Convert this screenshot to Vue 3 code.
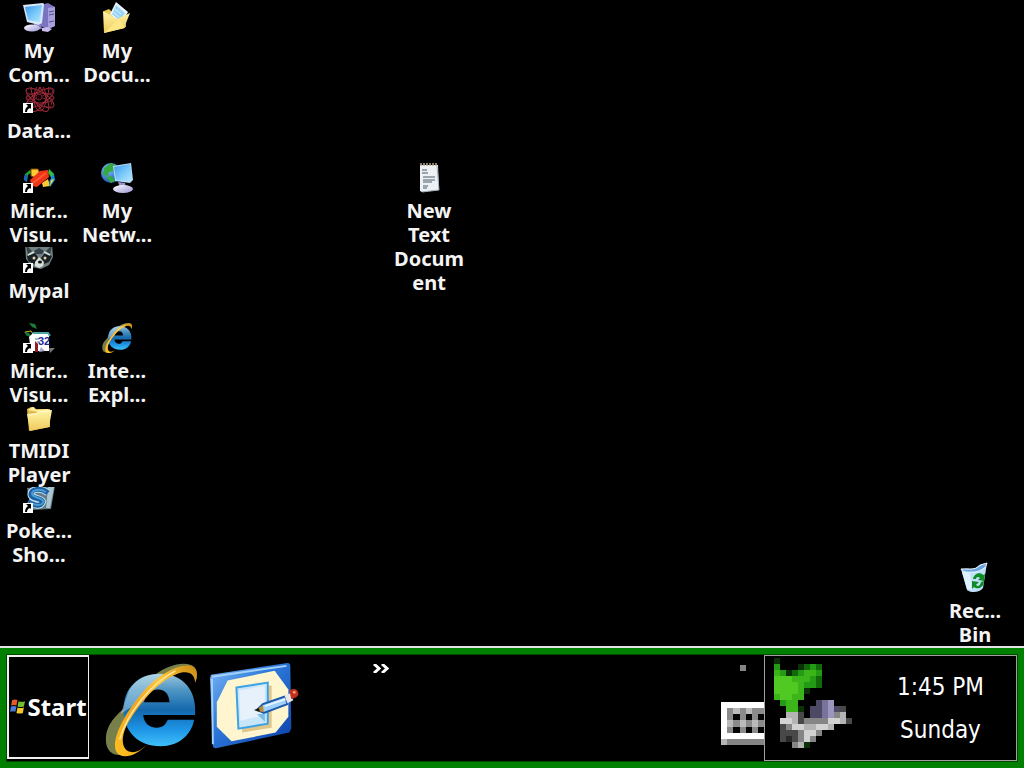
<script setup>
const shortcuts = [
  { icon: 'computer', lines: ['My', 'Com...'], col: 1, row: 1 },
  { icon: 'documents', lines: ['My', 'Docu...'], col: 2, row: 1 },
  { icon: 'atom', lines: ['Data...'], col: 1, row: 2, link: true },
  { icon: 'studio', lines: ['Micr...', 'Visu...'], col: 1, row: 3, link: true },
  { icon: 'network', lines: ['My', 'Netw...'], col: 2, row: 3 },
  { icon: 'notepad', lines: ['New', 'Text', 'Docum', 'ent'], col: 6, row: 3 },
  { icon: 'raccoon', lines: ['Mypal'], col: 1, row: 4, link: true },
  { icon: 'basic', lines: ['Micr...', 'Visu...'], col: 1, row: 5, link: true },
  { icon: 'explorer', lines: ['Inte...', 'Expl...'], col: 2, row: 5 },
  { icon: 'folder', lines: ['TMIDI', 'Player'], col: 1, row: 6 },
  { icon: 'showdown', lines: ['Poke...', 'Sho...'], col: 1, row: 7, link: true },
  { icon: 'recycle', lines: ['Rec...', 'Bin'], col: 13, row: 8 },
]

const palette = {
  a: '#50c923', b: '#3bb51a', g: '#249b14', d: '#12690a', k: '#0a3206',
  w: '#d2d2d2', l: '#b4b4b4', m: '#858585', n: '#484848', o: '#282828',
  p: '#77739a', q: '#4d4965', v: '#9b96bd',
}
const toPixels = (rows) =>
  rows.flatMap((row, y) =>
    [...row].map((c, x) => ({ x, y, fill: palette[c] })).filter((p) => p.fill))

const trayPixels = toPixels([
  '.k............',
  '.g...kdgd.....',
  '.bgkdgbbg.....',
  '.aaabbbgd.....',
  '.aaaabggd.....',
  '.aaaabk.......',
  '.baabb........',
  '..gbb...qpv...',
  '...bbk.qqpvqn.',
  '...lln.qqpvml.',
  '..wwlnmmmmwwln',
  '..nmwwllwwl...',
  '..nnnmwwm.....',
  '..nonmwm......',
  '....mlk.......',
])
</script>

<template>
  <div class="screen">
    <svg class="defs" aria-hidden="true">
      <defs>
        <linearGradient id="glass" x1="0" y1="0" x2="1" y2="1">
          <stop offset="0" stop-color="#3a96e8" /><stop offset="0.5" stop-color="#75c6fa" /><stop offset="1" stop-color="#b5e8ff" />
        </linearGradient>
        <linearGradient id="plastic" x1="0" y1="0" x2="1" y2="1">
          <stop offset="0" stop-color="#ffffff" /><stop offset="1" stop-color="#9a96d6" />
        </linearGradient>
        <linearGradient id="manila" x1="0" y1="0" x2="0" y2="1">
          <stop offset="0" stop-color="#fff5a8" /><stop offset="1" stop-color="#efc95a" />
        </linearGradient>
        <linearGradient id="ieblue" x1="0" y1="0" x2="0" y2="1">
          <stop offset="0" stop-color="#9cc5dc" /><stop offset="0.22" stop-color="#4f96c4" /><stop offset="0.5" stop-color="#1468ac" /><stop offset="0.75" stop-color="#1c91e3" /><stop offset="1" stop-color="#3fc0fa" />
        </linearGradient>
        <linearGradient id="iegold" x1="1" y1="0" x2="0" y2="1">
          <stop offset="0" stop-color="#c98a12" /><stop offset="0.3" stop-color="#ffc63a" /><stop offset="0.6" stop-color="#f2a51c" /><stop offset="1" stop-color="#ffc020" />
        </linearGradient>
        <linearGradient id="frame" x1="0" y1="0" x2="1" y2="1">
          <stop offset="0" stop-color="#7db8f5" /><stop offset="0.4" stop-color="#2f7bdc" /><stop offset="1" stop-color="#0b3da8" />
        </linearGradient>
        <radialGradient id="globe" cx="0.35" cy="0.3" r="0.8">
          <stop offset="0" stop-color="#7fc7ff" /><stop offset="1" stop-color="#1246a8" />
        </radialGradient>
      </defs>

      <symbol id="computer" viewBox="0 0 32 32">
        <path d="M18 3l7-2 7 4v19l-7 3-8-3z" fill="#7a74c0" />
        <path d="M25 6l7-1v19l-7 3z" fill="#a7a0dc" />
        <path d="M26 10l5-1M26 13l5-1M26 20l5-1" stroke="#514c94" />
        <path d="M11 21l7 2 1 4-8 1z" fill="#8580c7" />
        <ellipse cx="9" cy="26" rx="8" ry="3.5" fill="url(#plastic)" />
        <path d="M0 3l20-2 1 1-2 19-3 2-12-3z" fill="#d8e8fb" />
        <path d="M2 5l17-2-2 17-12-2z" fill="url(#glass)" />
        <path d="M19 26l5-1 5 2-4 3-6-1z" fill="#c7bceb" />
      </symbol>
      <symbol id="documents" viewBox="0 0 32 32">
        <path d="M3 9l5-2 3 3h13l1 15-21 5z" fill="#edc951" />
        <path d="M15 0l12 10-7 12L9 12z" fill="#e9f8ff" />
        <path d="M15 3l9 8-5 8-8-7z" fill="#9bd4f4" />
        <path d="M14 7l6 5M12 10l6 5" stroke="#d9f2ff" />
        <path d="M2 9l14 8 13-6-6 15L3 31z" fill="url(#manila)" />
        <path d="M3 31l15-14 6 9z" fill="#ffe783" />
      </symbol>
      <symbol id="atom" viewBox="0 0 32 32">
        <g fill="none" stroke="#a02b3a" stroke-width="1">
          <ellipse cx="17" cy="16" rx="14" ry="5" /><ellipse cx="17" cy="16" rx="16" ry="6" transform="rotate(32 17 16)" />
          <ellipse cx="17" cy="16" rx="15" ry="6" transform="rotate(62 17 16)" /><ellipse cx="17" cy="16" rx="13" ry="6" transform="rotate(90 17 16)" />
          <ellipse cx="17" cy="16" rx="15" ry="6" transform="rotate(118 17 16)" /><ellipse cx="17" cy="16" rx="16" ry="6" transform="rotate(148 17 16)" />
        </g>
        <path d="M3 7h27l-2 18-22-1zM4 11l25 8M29 11L4 19" fill="none" stroke="#7d2430" stroke-dasharray="3 1" />
        <circle cx="16" cy="15" r="3" fill="#100204" stroke="#7c1f2a" />
      </symbol>
      <symbol id="studio" viewBox="0 0 32 32">
        <path d="M7 8l-5 4-1 6 3 2 1-7 4-3z" fill="#18a62c" /><path d="M1 14l3-2v8l-2-1z" fill="#2358d8" />
        <path d="M8 7h7l2 5-4 4-5-2z" fill="#ffc933" stroke="#7c4b00" /><path d="M19 21l6-4 2 7-7 1z" fill="#ffc933" />
        <path d="M26 7l5 5 1 6-5 7-1-5 2-4z" fill="#148ce0" /><path d="M26 7l5 5-3 3-3-4z" fill="#31bd36" /><path d="M28 18l3-1-4 7z" fill="#ffdc27" />
        <path d="M7 18L17 9l8-1 1 7-12 10-5-1z" fill="#ef3518" /><path d="M10 21L23 11" stroke="#ff5a30" stroke-width="2" />
      </symbol>
      <symbol id="network" viewBox="0 0 32 32">
        <circle cx="10" cy="11" r="10" fill="url(#globe)" />
        <path d="M3 6l7-5 6 3-3 5-5 1-1 4-5-1zM5 15l6-1 3 5-4 2z" fill="#35a93e" />
        <path d="M17 20l7 1 1 5-6-1z" fill="#9c98cf" /><ellipse cx="22" cy="27" rx="10" ry="4" fill="url(#plastic)" />
        <path d="M12 4l18-3 2 17-3 3-15-2z" fill="#b5dcf8" /><path d="M13 5l16-3 2 15-2 2-14-1z" fill="url(#glass)" />
      </symbol>
      <symbol id="notepad" viewBox="0 0 32 32">
        <path d="M7 3h18l1 25-17 2-2-1z" fill="#edf1f4" /><path d="M24 4l2 24-17 2" fill="none" stroke="#9fb1bd" />
        <path d="M8 4V1m3 3V1m3 3V1m3 3V1m3 3V1m3 3V1" stroke="#b2a98d" stroke-width="1.5" />
        <path d="M9 8h5M9 11h6M10 15h12M10 18h12M10 20h9M10 24h5M10 26h4" stroke="#4b5b6b" />
      </symbol>
      <symbol id="raccoon" viewBox="0 0 32 32">
        <path d="M2 2l8 3h12l7-3 1 13-4 8-8 4-9-2-6-8z" fill="#718080" />
        <path d="M3 3l6 6-4 4zM29 3l-6 6 4 4z" fill="#344249" />
        <path d="M4 14l8-3 4 6-5 5-6-3zM18 16l4-5 7 3-3 6-5 2z" fill="#182023" />
        <path d="M11 9l5-3 5 3-2 3h-6z" fill="#344148" /><path d="M5 13l6-3M21 10l6 3" stroke="#dce4df" stroke-width="1.5" />
        <circle cx="11" cy="16" r="1.5" fill="#e3d2b1" /><circle cx="22" cy="16" r="1.5" fill="#e3d2b1" />
        <path d="M12 20l4-5 5 5-1 4-4 2-4-2z" fill="#d9dfda" /><ellipse cx="17" cy="20" rx="2" ry="1.5" fill="#111" />
      </symbol>
      <symbol id="basic" viewBox="0 0 32 32">
        <path d="M6 1l6 1 2 5-5-2zM1 10l5 1 3 4-5-1z" fill="#1b7b38" /><path d="M2 10l6-1 2 3" fill="none" stroke="#c6bd2d" />
        <path d="M6 15l4-4h16v18H8z" fill="#fff" /><path d="M10 11h15l2 3" fill="none" stroke="#49a7a6" stroke-width="2" />
        <path d="M12 17h4m-2 3h3" stroke="#a7bac2" stroke-width="2" />
        <text x="15" y="23" class="badge32">32</text><path d="M12 19l3 3v8h-3z" fill="#8f1d20" /><path d="M18 25l4 4-6 1z" fill="#a8a8ce" /><path d="M26 26h6l-5 5z" fill="#777" />
      </symbol>
      <symbol id="explorer" viewBox="0 0 100 100">
        <path d="M32 42C43 16 72-2 91 4c7 3 7 12 4 18 0-10-7-14-18-11C57 18 38 39 27 62c-8 15-11 26-5 33C14 98 3 93 4 79 4 64 17 51 32 42z" fill="#777f4a" />
        <path fill-rule="evenodd" d="M58 13C84 13 97 31 95 55H42c1 9 7 13 14 13 6 0 9-3 11-8h27c-3 16-16 27-34 27-24 0-38-16-38-37 0-23 16-37 36-37zM43 42h26c-1-9-5-13-12-13-8 0-13 5-14 13z" fill="url(#ieblue)" />
        <path d="M28 29c9-13 23-18 40-15L33 45l-14 9z" fill="#c6e4ef" opacity=".45" />
        <path d="M39 35C54 16 77 2 91 5c7 2 7 10 4 17 0-9-7-13-18-9C56 21 36 46 25 66c-7 15-4 27 6 27 6 0 11-4 15-8-10 12-26 16-31 8-7-11 8-39 24-58z" fill="url(#iegold)" />
        <path d="M75 10C49 23 25 55 18 80" fill="none" stroke="#ffe9a1" stroke-width="1.5" />
      </symbol>
      <symbol id="folder" viewBox="0 0 32 32">
        <path d="M4 7l6-3 3 3h14v18L6 29z" fill="#dfb84c" /><path d="M5 8l5-3 3 3 12-1 1 5z" fill="#fff0a0" />
        <path d="M4 12l9-1 3-2 13-1-3 17-19 4z" fill="url(#manila)" /><path d="M6 13l7-1 3-2 11-1" fill="none" stroke="#fffbd0" />
      </symbol>
      <symbol id="showdown" viewBox="0 0 32 32">
        <path d="M4 6L32 4l-4 23-20 1z" fill="#647985" /><path d="M25 5l6 0-4 21h-4zM12 7l12-1-1 3H8z" fill="#abc6d1" />
        <path d="M25 11c-7-6-17-4-17 1-1 5 14 4 11 9-2 4-9 2-14-1" fill="none" stroke="#b9e1ef" stroke-width="7" />
        <path d="M25 11c-7-6-17-4-17 1-1 5 14 4 11 9-2 4-9 2-14-1" fill="none" stroke="#205ea4" stroke-width="5" />
        <path d="M23 10c-7-4-14-2-14 2 0 4 14 4 11 9-2 3-8 2-13 0" fill="none" stroke="#479ed0" stroke-width="2" />
      </symbol>
      <symbol id="recycle" viewBox="0 0 32 32">
        <path d="M2 7c8-2 12 2 16-2 4-4 7-3 10-4l-4 25c-3 5-13 5-16 2z" fill="#bfe0fa" />
        <path d="M2 7c9 0 14 1 18-3 3-2 6-2 8-3-1 5-6 8-12 9-6 0-12 1-14-3z" fill="#6ba5dc" stroke="#edf9ff" />
        <path d="M3 10l8 1 2 17-5-1z" fill="#e9f6ff" opacity=".8" />
        <path d="M14 17c1-6 8-7 10-4l2-1-1 7-6-1 2-2c-2-2-4-1-4 1zM25 19c0 7-7 9-10 6l-2 2v-8l7 1-3 3c2 2 4 1 5-3z" fill="#0f8d22" />
      </symbol>
      <symbol id="shortcut" viewBox="0 0 10 10">
        <path d="M0 0h10v10H0z" fill="#fff" /><path d="M3 1h5v5L7 5Q4 6 4 9H2Q2 5 5 3z" fill="#000" />
      </symbol>
    </svg>

    <main class="desktop">
      <button
        v-for="item in shortcuts" :key="item.col + '-' + item.row" type="button" class="shortcut"
        :style="{ gridColumn: item.col, gridRow: item.row }"
      >
        <span class="picture">
          <svg class="icon" aria-hidden="true"><use :href="'#' + item.icon" /></svg>
          <svg v-if="item.link" class="arrow" aria-hidden="true"><use href="#shortcut" /></svg>
        </span>
        <span class="label"><span v-for="line in item.lines" :key="line">{{ line }}</span></span>
      </button>
    </main>

    <footer class="taskbar">
      <button type="button" class="start">
        <svg class="flag" viewBox="0 0 14 14" aria-hidden="true">
          <path d="M2 1q3-1 5 0L6 6Q4 5 1 6z" fill="#e35a2b" /><path d="M8 2q3 1 6 0l-1 5q-3 1-6 0z" fill="#6fbd31" />
          <path d="M1 7q3-1 5 0l-1 5q-2-1-5 0z" fill="#477be0" /><path d="M7 8q3 1 6 0l-1 5q-3 1-6 0z" fill="#f1c72d" />
        </svg>
        <span>Start</span>
      </button>
      <nav class="quick" aria-label="Quick Launch">
        <button type="button" class="launch" aria-label="Internet Explorer">
          <svg class="big" aria-hidden="true"><use href="#explorer" /></svg>
        </button>
        <button type="button" class="launch" aria-label="Show Desktop">
          <svg class="big" viewBox="0 0 100 100" aria-hidden="true">
            <path d="M3 14L81 2q3 0 3 3l1 64-2 4L8 89q-3 0-3-3L2 18z" fill="url(#frame)" />
            <path d="M4 16l76-11M5 85L4 18" stroke="#a4d1fa" stroke-width="2" fill="none" />
            <path d="M20 20l48-10 14 19v28L69 73 24 82 9 67V42z" fill="#fff6cf" />
            <path d="M31 30l34-5v43l-30 5z" fill="#cba65b" opacity=".6" />
            <path d="M29 27l32-5v42l-30 5z" fill="#c9e5fa" stroke="#3ca2e4" stroke-width="2" />
            <path d="M32 30l26-5v30l-25 6z" fill="#e6f1fc" />
            <path d="M50 50l6-6 23-8 2 8-24 9z" fill="#9fd0ff" stroke="#1e58aa" stroke-width="2" />
            <path d="M58 46l21-7" stroke="#e3f4ff" stroke-width="2" /><path d="M48 51l8-6 1 7z" fill="#b98a32" /><path d="M47 50l5-2 1 4z" fill="#161616" />
            <path d="M50 54l8 8v-8z" fill="#79bce8" />
            <path d="M78 35l6-2 3 7-6 3z" fill="#e8e8e8" /><path d="M83 30q5-3 8 0 3 4-1 7l-5 2z" fill="#c4301f" /><circle cx="88" cy="32" r="1.5" fill="#ff9b75" />
          </svg>
        </button>
      </nav>
      <button type="button" class="more" aria-label="More">
        <svg viewBox="0 0 16 9" aria-hidden="true"><path d="M1 0l5 4.5L1 9M9 0l5 4.5L9 9" fill="none" stroke="#fff" stroke-width="3" /></svg>
      </button>
      <div class="language">
        <span class="dot"></span>
        <svg class="keyboard" viewBox="0 0 43 43" shape-rendering="crispEdges" aria-hidden="true">
          <path d="M0 0h43v43H0z" fill="#fff" /><path d="M6 37h37v6H6z" fill="#858585" /><path d="M0 37h6v6H0z" fill="#b5b5b5" />
          <path d="M6 6h37v25H6z" fill="#8b8b8b" />
          <path d="M12 12h7v6h-7zM25 12h6v6h-6zM37 12h6v6h-6zM12 25h7v6h-7zM25 25h6v6h-6zM37 25h6v6h-6z" fill="#050505" />
          <path d="M12 6h7v6h-7zM25 6h6v6h-6zM6 18h6v7H6zM19 18h6v7h-6zM31 18h6v7h-6z" fill="#bbb" />
        </svg>
      </div>
      <section class="tray" aria-label="Notification area">
        <svg class="device" viewBox="0 0 16 16" shape-rendering="crispEdges" aria-hidden="true">
          <rect v-for="p in trayPixels" :key="p.x + '-' + p.y" :x="p.x" :y="p.y" width="1" height="1" :fill="p.fill" />
        </svg>
        <div class="clock"><time>1:45 PM</time><span>Sunday</span></div>
      </section>
    </footer>
  </div>
</template>

<style>
body { background: #000; }
</style>

<style scoped>
.screen {
  display: flex; flex-direction: column; height: 100vh; overflow: hidden;
  background: #000; color: #fff;
  font-family: "Noto Sans", Tahoma, "DejaVu Sans", sans-serif;
}
.defs { position: absolute; width: 0; height: 0; }
button { margin: 0; padding: 0; border: 0; background: none; color: inherit; font: inherit; }
.desktop {
  flex: 1; min-height: 0; padding-top: 2px;
  display: grid; grid-template-columns: repeat(auto-fill, 78px); grid-auto-rows: 80px;
}
.shortcut { display: flex; flex-direction: column; align-items: center; align-self: start; }
.picture { position: relative; display: block; width: 32px; height: 32px; }
.icon { display: block; width: 32px; height: 32px; }
.arrow { position: absolute; left: 0; bottom: 1px; width: 10px; height: 10px; }
.label {
  position: relative; z-index: 1; margin-top: 5px; display: flex; flex-direction: column;
  background: #000; color: #f4f4f4; font-size: 20px; line-height: 24px; font-weight: 700; text-align: center;
}
.badge32 { font: 700 11px "Liberation Sans", sans-serif; fill: #1b2c9b; }
.taskbar {
  position: relative; z-index: 2; flex: none; box-sizing: border-box; height: 122px; display: flex;
  border-top: 2px solid #e4e4e4; padding: 7px 7px 0; background: #000;
  box-shadow: inset 0 0 0 6px #008000, inset 0 0 0 7px #004a00;
}
.start {
  box-sizing: border-box; width: 82px; height: 104px; border: 2px solid #f0f0f0; border-right-width: 1px;
  display: flex; align-items: center; justify-content: center; gap: 2px; padding-bottom: 2px; font-size: 24px; font-weight: 700;
}
.flag { width: 15px; height: 15px; flex: none; }
.quick { display: flex; gap: 6px; padding: 6px 0 0 12px; }
.launch { width: 100px; height: 98px; }
.big { display: block; width: 100%; height: 100%; }
.more { align-self: flex-start; margin: 9px 0 0 66px; }
.more svg { display: block; width: 16px; height: 9px; }
.language { margin-left: auto; display: flex; flex-direction: column; align-items: center; width: 43px; }
.dot { width: 6px; height: 6px; margin-top: 10px; background: #858585; }
.keyboard { width: 43px; height: 43px; margin-top: 31px; }
.tray {
  box-sizing: border-box; width: 253px; height: 106px; border: 1px solid #a0a0a0;
  display: flex; justify-content: space-between; padding-left: 3px;
}
.device { width: 96px; height: 96px; margin-top: 2px; }
.clock {
  width: 151px; display: flex; flex-direction: column; align-items: center; padding-top: 10px;
  font-family: "DejaVu Sans Condensed", Tahoma, "Noto Sans", sans-serif; font-size: 24px; line-height: 43px;
}
</style>
